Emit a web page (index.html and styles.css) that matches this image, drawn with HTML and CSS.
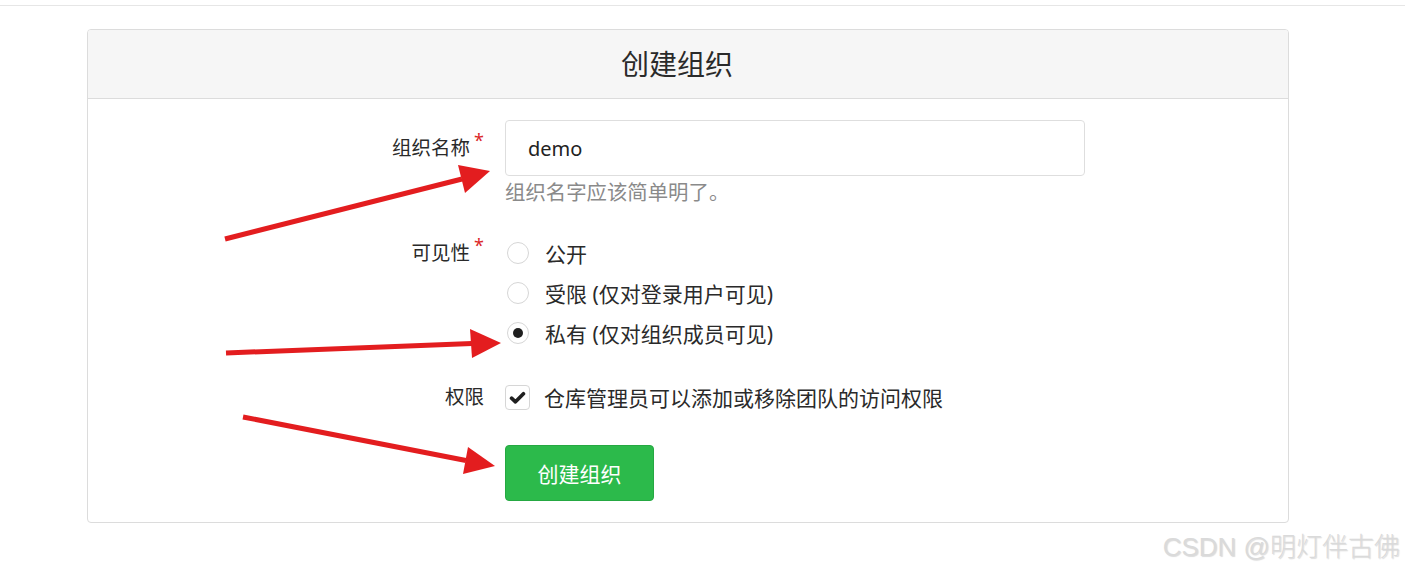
FILE: index.html
```html
<!DOCTYPE html>
<html lang="zh-CN">
<head>
<meta charset="utf-8">
<title>创建组织</title>
<link rel="stylesheet" href="styles.css">
</head>
<body>
<div class="topbar"></div>
<main class="page">
  <section class="card">
    <h3 class="card-header">创建组织</h3>
    <form class="card-body">
      <div class="field">
        <label class="field-label">组织名称<span class="req">*</span></label>
        <div class="field-control">
          <div class="input">demo</div>
          <p class="help">组织名字应该简单明了。</p>
        </div>
      </div>
      <div class="field field-vis">
        <label class="field-label">可见性<span class="req">*</span></label>
        <div class="field-control">
          <div class="option"><span class="radio"></span><span>公开</span></div>
          <div class="option"><span class="radio"></span><span>受限 (仅对登录用户可见)</span></div>
          <div class="option"><span class="radio checked"></span><span>私有 (仅对组织成员可见)</span></div>
        </div>
      </div>
      <div class="field field-perm">
        <label class="field-label plain">权限</label>
        <div class="field-control">
          <div class="option"><span class="checkbox"><svg viewBox="0 0 16 16" width="17" height="17"><path d="M2.4 8.6 L6.1 12.1 L13.6 4.4" fill="none" stroke="#1f1f1f" stroke-width="3.4" stroke-linecap="round" stroke-linejoin="round"/></svg></span><span>仓库管理员可以添加或移除团队的访问权限</span></div>
        </div>
      </div>
      <div class="field field-submit">
        <span class="field-label"></span>
        <div class="field-control">
          <button type="button" class="btn">创建组织</button>
        </div>
      </div>
    </form>
  </section>
</main>
<svg class="arrows" width="1405" height="573" viewBox="0 0 1405 573">
  <g fill="#e31d1f" stroke="#e31d1f">
    <line x1="225" y1="239" x2="462" y2="179" stroke-width="5"/>
    <polygon points="490,171 458,165 465,193" stroke="none"/>
    <line x1="226" y1="353" x2="472" y2="343.5" stroke-width="5"/>
    <polygon points="501,343 470,329 472,358" stroke="none"/>
    <line x1="243" y1="417" x2="466" y2="460.5" stroke-width="5"/>
    <polygon points="495,466 468,447 463,474" stroke="none"/>
  </g>
</svg>
<div class="watermark">CSDN @明灯伴古佛</div>
</body>
</html>
```

FILE: styles.css
```css
* { box-sizing: border-box; }
html, body { margin: 0; padding: 0; }
body {
  width: 1405px;
  height: 573px;
  overflow: hidden;
  background: #fff;
  font-family: "Noto Sans", "Noto Sans CJK SC", sans-serif;
  color: #2a2a2a;
  position: relative;
}
.topbar {
  height: 6px;
  border-bottom: 1px solid #e6e6e6;
}
.page {
  padding: 23px 0 0 87px;
}
.card {
  width: 1202px;
  border: 1px solid #dcdcdc;
  border-radius: 4px;
  overflow: hidden;
}
.card-header {
  margin: 0;
  height: 69px;
  background: #f6f6f6;
  border-bottom: 1px solid #dcdcdc;
  display: flex;
  align-items: center;
  justify-content: center;
  font-size: 28px;
  font-weight: 400;
  color: #2a2a2a;
  padding: 0 22px 2px 0;
}
.card-body {
  padding: 21px 0 21px 0;
  margin: 0;
}
.field {
  display: grid;
  grid-template-columns: 396px 580px;
  column-gap: 21px;
}
.field-label {
  text-align: right;
  font-size: 19.5px;
  line-height: 56px;
  padding-right: 0;
  color: #2a2a2a;
}
.req {
  color: #db2828;
  font-size: 18px;
  position: relative;
  top: -8px;
  margin-left: 4px;
}
.input {
  height: 56px;
  border: 1px solid #dedede;
  border-radius: 4px;
  padding: 0 22px;
  display: flex;
  align-items: center;
  font-size: 20px;
  color: #222;
}
.help {
  margin: 3px 0 0;
  font-size: 20.4px;
  line-height: 26px;
  color: #8a8a8a;
}
.field-vis { margin-top: 28px; }
.field-vis .field-label { line-height: 40px; }
.option {
  height: 40px;
  display: flex;
  align-items: center;
  font-size: 21px;
  color: #2a2a2a;
}
.radio {
  width: 22px;
  height: 22px;
  border: 1px solid #d6d6d6;
  border-radius: 50%;
  margin: 0 16px 0 2px;
  display: inline-flex;
  align-items: center;
  justify-content: center;
  flex: none;
}
.radio.checked::after {
  content: "";
  width: 10px;
  height: 10px;
  border-radius: 50%;
  background: #1f1f1f;
}
.field-perm { margin-top: 24px; }
.field-perm .field-label { line-height: 40px; }
.checkbox {
  width: 25px;
  height: 25px;
  border: 1px solid #d6d6d6;
  border-radius: 4px;
  margin: 0 14px 0 0;
  display: inline-flex;
  align-items: center;
  justify-content: center;
  flex: none;
}
.field-submit { margin-top: 28px; }
.btn {
  width: 149px;
  height: 56px;
  background: #2cba4b;
  border: 1px solid #25a842;
  border-radius: 4px;
  color: #fff;
  font-family: "Noto Sans", "Noto Sans CJK SC", sans-serif;
  font-size: 21px;
  padding: 0;
  display: flex;
  align-items: center;
  justify-content: center;
}
.arrows {
  position: absolute;
  left: 0;
  top: 0;
  pointer-events: none;
}
.watermark {
  position: absolute;
  right: 5px;
  top: 530px;
  font-size: 26px;
  line-height: 34px;
  font-weight: 300;
  color: #dadada;
  text-shadow: 1px 1px 1px rgba(0, 0, 0, 0.14);
  font-family: "Liberation Sans", "Noto Sans CJK SC", sans-serif;
}
```
